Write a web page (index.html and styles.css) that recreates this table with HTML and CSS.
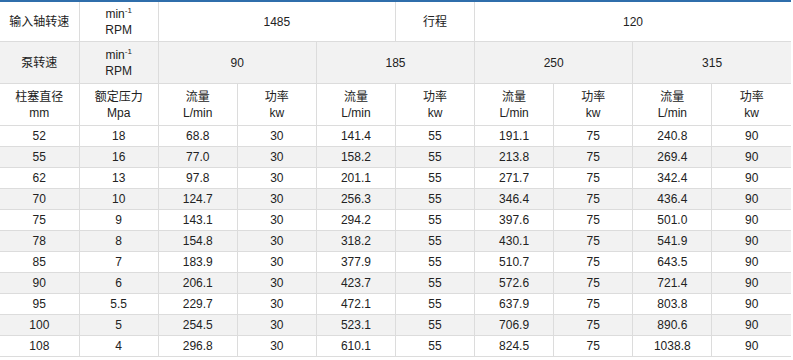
FILE: index.html
```html
<!DOCTYPE html>
<html lang="zh-CN">
<head>
  <meta charset="UTF-8" />
  <title>柱塞泵参数表</title>
  <link rel="stylesheet" href="styles.css">
</head>
<body>
  <table class="spec">
    <colgroup>
      <col><col><col><col><col><col><col><col><col><col>
    </colgroup>
    <tr class="head">
      <td>输入轴转速</td>
      <td>min<sup>-1</sup><br>RPM</td>
      <td colspan="3">1485</td>
      <td>行程</td>
      <td colspan="4">120</td>
    </tr>
    <tr class="head alt">
      <td>泵转速</td>
      <td>min<sup>-1</sup><br>RPM</td>
      <td colspan="2">90</td>
      <td colspan="2">185</td>
      <td colspan="2">250</td>
      <td colspan="2">315</td>
    </tr>
    <tr class="head">
      <td>柱塞直径<br>mm</td>
      <td>额定压力<br>Mpa</td>
      <td>流量<br>L/min</td>
      <td>功率<br>kw</td>
      <td>流量<br>L/min</td>
      <td>功率<br>kw</td>
      <td>流量<br>L/min</td>
      <td>功率<br>kw</td>
      <td>流量<br>L/min</td>
      <td>功率<br>kw</td>
    </tr>
    <tr><td>52</td><td>18</td><td>68.8</td><td>30</td><td>141.4</td><td>55</td><td>191.1</td><td>75</td><td>240.8</td><td>90</td></tr>
    <tr class="alt"><td>55</td><td>16</td><td>77.0</td><td>30</td><td>158.2</td><td>55</td><td>213.8</td><td>75</td><td>269.4</td><td>90</td></tr>
    <tr><td>62</td><td>13</td><td>97.8</td><td>30</td><td>201.1</td><td>55</td><td>271.7</td><td>75</td><td>342.4</td><td>90</td></tr>
    <tr class="alt"><td>70</td><td>10</td><td>124.7</td><td>30</td><td>256.3</td><td>55</td><td>346.4</td><td>75</td><td>436.4</td><td>90</td></tr>
    <tr><td>75</td><td>9</td><td>143.1</td><td>30</td><td>294.2</td><td>55</td><td>397.6</td><td>75</td><td>501.0</td><td>90</td></tr>
    <tr class="alt"><td>78</td><td>8</td><td>154.8</td><td>30</td><td>318.2</td><td>55</td><td>430.1</td><td>75</td><td>541.9</td><td>90</td></tr>
    <tr><td>85</td><td>7</td><td>183.9</td><td>30</td><td>377.9</td><td>55</td><td>510.7</td><td>75</td><td>643.5</td><td>90</td></tr>
    <tr class="alt"><td>90</td><td>6</td><td>206.1</td><td>30</td><td>423.7</td><td>55</td><td>572.6</td><td>75</td><td>721.4</td><td>90</td></tr>
    <tr><td>95</td><td>5.5</td><td>229.7</td><td>30</td><td>472.1</td><td>55</td><td>637.9</td><td>75</td><td>803.8</td><td>90</td></tr>
    <tr class="alt"><td>100</td><td>5</td><td>254.5</td><td>30</td><td>523.1</td><td>55</td><td>706.9</td><td>75</td><td>890.6</td><td>90</td></tr>
    <tr><td>108</td><td>4</td><td>296.8</td><td>30</td><td>610.1</td><td>55</td><td>824.5</td><td>75</td><td>1038.8</td><td>90</td></tr>
  </table>
</body>
</html>
```

FILE: styles.css
```css
body {
  margin: 0;
  background: #fff;
  color: #222;
  font-family: "Liberation Sans", Arial, "Noto Sans CJK SC", sans-serif;
  font-size: 12px;
}

.spec {
  width: 791px;
  table-layout: fixed;
  border-collapse: collapse;
  border-top: 2px solid #2f6eab;
}

.spec td {
  padding: 0;
  height: 20px;
  line-height: 16px;
  text-align: center;
  vertical-align: middle;
  border-right: 1px solid #dcdcdc;
  border-bottom: 1px solid #dcdcdc;
}

.spec td:last-child {
  border-right: none;
}

.spec tr.head td {
  height: 41px;
}

.spec tr:first-child td {
  height: 39px;
}

.spec tr.alt td {
  background: #f2f2f2;
}

.spec sup {
  font-size: 8px;
  line-height: 0;
  vertical-align: 5px;
}
```
